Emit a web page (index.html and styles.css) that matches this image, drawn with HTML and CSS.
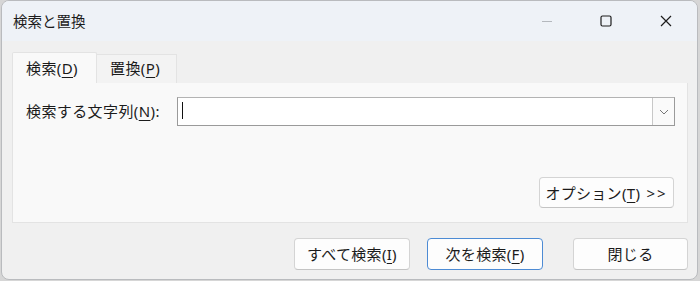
FILE: index.html
```html
<!DOCTYPE html>
<html lang="ja">
<head>
<meta charset="utf-8">
<link rel="stylesheet" href="styles.css">
</head>
<body>
<div class="window">
  <div class="titlebar">
    <span class="title">検索と置換</span>
    <div class="controls">
      <span class="ctl min"><svg width="12" height="12" viewBox="0 0 12 12"><line x1="1" y1="6.5" x2="11" y2="6.5" stroke="#b4b8bd" stroke-width="1"/></svg></span>
      <span class="ctl max"><svg width="12" height="12" viewBox="0 0 12 12"><rect x="1" y="1" width="10" height="10" rx="1.5" fill="none" stroke="#1c1c1c" stroke-width="1.2"/></svg></span>
      <span class="ctl close"><svg width="12" height="12" viewBox="0 0 12 12"><path d="M1 1L11 11M11 1L1 11" stroke="#1c1c1c" stroke-width="1.2"/></svg></span>
    </div>
  </div>
  <div class="content">
    <div class="tabs">
      <div class="tab active">検索(<u>D</u>)</div>
      <div class="tab">置換(<u>P</u>)</div>
    </div>
    <div class="panel">
      <div class="row">
        <label class="label">検索する文字列(<u>N</u>):</label>
        <div class="combo">
          <div class="field"><span class="caret"></span></div>
          <div class="drop"><svg width="10" height="6" viewBox="0 0 10 6"><path d="M1 1L5 5L9 1" fill="none" stroke="#777" stroke-width="1"/></svg></div>
        </div>
      </div>
      <div class="opt-row">
        <button class="btn opt">オプション(<u>T</u>) <span class="arrows">&gt;&gt;</span></button>
      </div>
    </div>
    <div class="actions">
      <button class="btn act">すべて検索(<u>I</u>)</button>
      <button class="btn act default">次を検索(<u>F</u>)</button>
      <button class="btn act close-btn">閉じる</button>
    </div>
  </div>
</div>
</body>
</html>
```
FILE: styles.css
```css
* { box-sizing: border-box; }
html, body {
  margin: 0;
  padding: 0;
  width: 700px;
  height: 281px;
  background: #d6d6d6;
  overflow: hidden;
  font-family: "Noto Sans", "Noto Sans CJK JP", sans-serif;
  color: #1b1b1b;
}
.window {
  margin-left: 1px;
  width: 697px;
  height: 280px;
  border: 1px solid #b9bbbe;
  border-radius: 8px;
  background: #f0f0f0;
  overflow: hidden;
}
.titlebar {
  height: 40px;
  background: #eef2f7;
  display: flex;
  align-items: center;
  justify-content: space-between;
  padding-left: 11px;
}
.title {
  font-size: 14.5px;
  line-height: 20px;
  margin-top: -1px;
}
.controls {
  display: flex;
  height: 100%;
}
.ctl {
  width: 58px;
  height: 100%;
  display: flex;
  align-items: center;
  justify-content: center;
}
.ctl.min { width: 60px; }
.ctl.close { width: 62px; }
.content {
  padding: 11px 9px 0 10px;
}
.tabs {
  display: flex;
  align-items: flex-end;
  height: 31px;
}
.tab {
  font-size: 15px;
  letter-spacing: 0.4px;
  height: 29px;
  line-height: 27px;
  padding: 0 0 0 13px;
  background: #f3f3f3;
  border: 1px solid #e3e3e3;
  border-bottom: none;
  border-left: none;
  width: 80px;
  white-space: nowrap;
}
.tab.active {
  height: 31px;
  line-height: 31px;
  width: 85px;
  background: #f9f9f9;
  border-left: 1px solid #e3e3e3;
  border-top-left-radius: 2px;
  border-top-right-radius: 2px;
}
.panel {
  width: 676px;
  height: 140px;
  background: #f9f9f9;
  border: 1px solid #e3e3e3;
  border-top: none;
  padding: 14px 12px 0 13px;
}
.row {
  display: flex;
  align-items: center;
  height: 29px;
}
.label {
  font-size: 15px;
  letter-spacing: 0.4px;
  width: 151px;
  flex: none;
  white-space: nowrap;
  margin-top: -3px;
}
.combo {
  flex: 1;
  display: flex;
  height: 29px;
  border: 1px solid #9a9a9a;
  border-top-color: #b3b3b3;
  background: #fff;
}
.field {
  flex: 1;
  display: flex;
  align-items: center;
  padding-left: 4px;
}
.caret {
  width: 1px;
  height: 17px;
  background: #111;
  margin-top: -3px;
}
.drop {
  width: 22px;
  border-left: 1px solid #c8c8c8;
  background: #fafafa;
  display: flex;
  align-items: center;
  justify-content: center;
}
u { text-decoration-thickness: 1px; text-underline-offset: 3px; }
.btn {
  font-family: "Noto Sans", "Noto Sans CJK JP", sans-serif;
  font-size: 15px;
  letter-spacing: 0.3px;
  color: #1b1b1b;
  background: #fdfdfd;
  border: 1px solid #d4d4d4;
  border-bottom-color: #c4c4c4;
  border-radius: 4px;
  padding: 0;
  height: 32px;
  line-height: 28px;
  white-space: nowrap;
}
.arrows { letter-spacing: 2px; margin-left: 2px; }
.opt-row {
  display: flex;
  justify-content: flex-end;
  margin-top: 51px;
  padding-right: 1px;
}
.opt {
  width: 135px;
  height: 31px;
}
.actions {
  display: flex;
  justify-content: flex-end;
  margin-top: 15px;
}
.act {
  width: 116px;
  margin-left: 17px;
}
.act.default {
  border-color: #4d8bd4;
}
.act.close-btn {
  width: 115px;
  margin-left: 30px;
}
```
